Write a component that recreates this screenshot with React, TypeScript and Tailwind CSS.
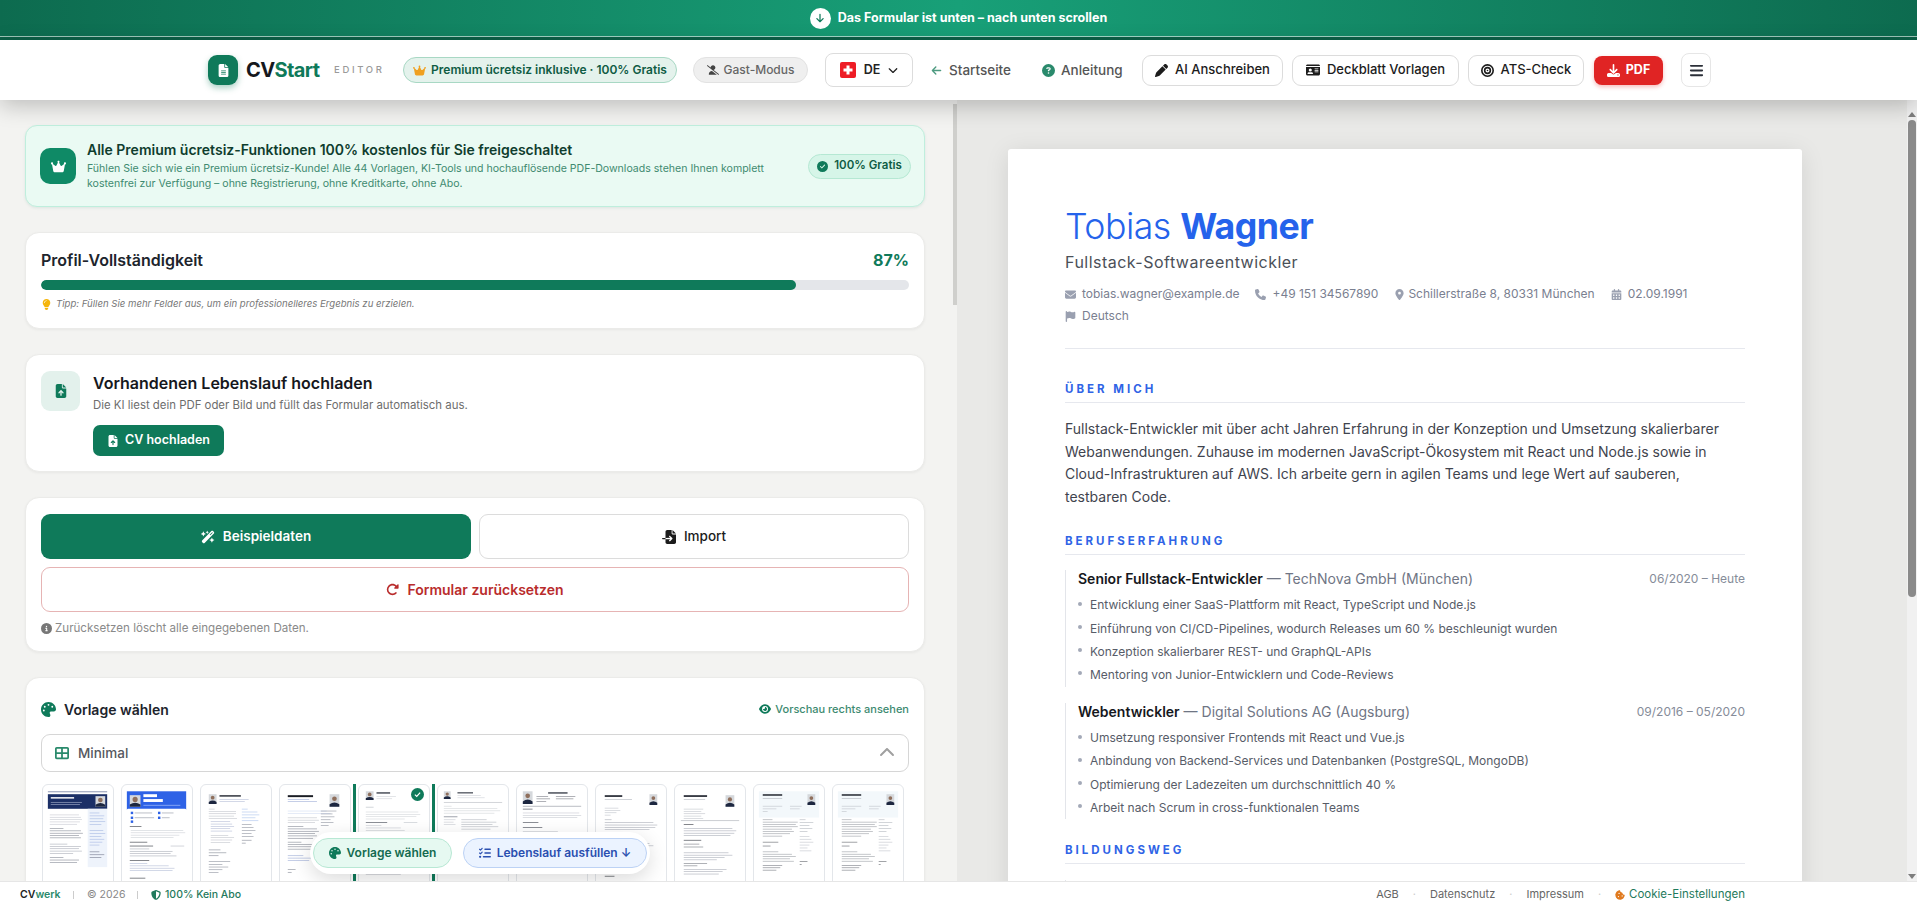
import React from "react";
import {
  FaArrowDown,
  FaArrowLeft,
  FaBars,
  FaBullseye,
  FaCalendarDays,
  FaChevronDown,
  FaChevronUp,
  FaCircleCheck,
  FaCircleInfo,
  FaCircleQuestion,
  FaCookieBite,
  FaCrown,
  FaEnvelope,
  FaEye,
  FaFileArrowUp,
  FaFileImport,
  FaFileLines,
  FaFlag,
  FaDownload,
  FaIdCard,
  FaLightbulb,
  FaListCheck,
  FaLocationDot,
  FaPalette,
  FaPen,
  FaPhone,
  FaRotateRight,
  FaShieldHalved,
  FaTableCellsLarge,
  FaUserSlash,
  FaWandMagicSparkles,
} from "react-icons/fa6";

const GRAY = "#8d93a0";

// one row of "text" in a template thumbnail
const Bar = ({ x, y, w, c = GRAY, h = 0.6 }: { x: number; y: number; w: number; c?: string; h?: number }) => (
  <rect x={x} y={y} width={w} height={h} fill={c} />
);

const Rows = ({ x, y, ws, step = 2.4, c = GRAY }: { x: number; y: number; ws: number[]; step?: number; c?: string }) => (
  <g opacity="0.75">
    {ws.map((w, i) => (
      <Bar key={i} x={x} y={y + i * step} w={w} c={c} />
    ))}
  </g>
);

const Photo = ({ x, y, w, h }: { x: number; y: number; w: number; h: number }) => (
  <g>
    <rect x={x} y={y} width={w} height={h} fill="#d5d8dc" />
    <circle cx={x + w / 2} cy={y + h * 0.36} r={w * 0.24} fill="#8f6f5c" />
    <path d={`M${x} ${y + h}V${y + h * 0.8}Q${x + w / 2} ${y + h * 0.5} ${x + w} ${y + h * 0.8}V${y + h}Z`} fill="#1d2740" />
  </g>
);

const thumbs: React.ReactNode[] = [
  <>
    <rect x="5" y="6" width="61" height="1" fill="#8a94b0" />
    <rect x="5" y="9" width="61" height="15" fill="#1b2f66" />
    <Bar x={8} y={12} w={24} c="#ffffff" h={1.5} />
    <Rows x={8} y={17} ws={[32, 30]} c="#dfe6f7" />
    <Photo x={54} y={11} w={10} h={11} />
    <rect x="46" y="24" width="20" height="60" fill="#eef3fb" />
    <Rows x={7} y={30} ws={[30, 32, 33, 31, 28]} c="#b4b8c2" />
    <Rows x={7} y={44} ws={[14, 32, 34, 30, 32]} c="#5c6272" />
    <Rows x={7} y={60} ws={[18, 32, 30, 33, 24]} c="#8d93a0" />
    <Rows x={7} y={74} ws={[14, 30, 28]} c="#5c6272" />
    <Rows x={48} y={28} ws={[10, 15, 14, 16, 12]} c="#8fa6dc" step={3} />
    <Rows x={48} y={46} ws={[14, 16, 12, 15, 13, 10]} c="#8fa6dc" step={3} />
    <Rows x={48} y={68} ws={[10, 15, 12]} c="#4a5068" step={3} />
  </>,
  <>
    <rect x="5" y="6" width="61" height="19" fill="#2e62e6" />
    <rect x="5" y="24" width="61" height="3" rx="1.5" fill="#ffffff" />
    <Photo x={8} y={10} w={11} h={12} />
    <Bar x={22} y={9} w={14} c="#ffffff" h={3} />
    <Bar x={22} y={14} w={20} c="#ffffff" h={3} />
    <Bar x={22} y={20} w={38} c="#bcd0ff" />
    <rect x="9" y="27" width="2.5" height="2.5" fill="#2e62e6" />
    <rect x="37" y="27" width="2.5" height="2.5" fill="#2e62e6" />
    <rect x="9" y="32" width="2.5" height="2.5" fill="#2e62e6" />
    <rect x="37" y="32" width="2.5" height="2.5" fill="#2e62e6" />
    <rect x="9" y="36" width="2.5" height="2.5" fill="#2e62e6" />
    <Bar x={13} y={28} w={18} />
    <Bar x={41} y={28} w={12} />
    <Bar x={13} y={33} w={20} />
    <Bar x={41} y={33} w={8} />
    <Bar x={8} y={42} w={12} c="#2b2f38" />
    <Rows x={9} y={46} ws={[54, 56, 50, 44]} c="#bdc1c9" />
    <Bar x={8} y={58} w={18} c="#2b2f38" />
    <Bar x={8} y={62} w={24} c="#2b2f38" />
    <Bar x={50} y={62} w={14} c="#b4b8c2" />
    <Rows x={8} y={65} ws={[20, 44, 42, 48]} />
    <Bar x={8} y={77} w={20} c="#2b2f38" />
    <Rows x={8} y={80} ws={[18, 40, 46, 44]} c="#9ba7c8" />
    <Bar x={8} y={95} w={16} c="#2b2f38" />
  </>,
  <>
    <Photo x={8} y={9} w={8} h={10} />
    <Bar x={19} y={10} w={22} c="#2b2f38" h={1.5} />
    <Rows x={19} y={14} ws={[30, 26]} c="#9ba7c8" />
    <Rows x={8} y={24} ws={[6, 28, 28, 26, 29]} c="#adb1ba" />
    <Rows x={10} y={37} ws={[20, 22, 24, 20, 22]} c="#9ba7c8" />
    <Rows x={10} y={51} ws={[18, 24, 22, 20]} c="#adb1ba" />
    <Rows x={8} y={66} ws={[12, 18, 10]} c="#5c6272" step={3} />
    <Rows x={8} y={78} ws={[22, 14, 20, 14, 10]} c="#6a7080" step={2.8} />
    <Rows x={42} y={24} ws={[6, 16, 18, 14, 17]} c="#8fb0e8" step={3} />
    <Rows x={42} y={40} ws={[10, 12, 14, 10, 12]} c="#6a7080" step={3} />
    <Rows x={42} y={56} ws={[10, 4]} c="#5c6272" step={3} />
  </>,
  <>
    <Bar x={8} y={10} w={26} c="#1a1d24" h={2} />
    <Rows x={8} y={14} ws={[22, 30]} c="#7a8fc8" />
    <Photo x={51} y={9} w={10} h={13} />
    <Rows x={8} y={26} ws={[40, 44]} c="#c5d2ee" />
    <Rows x={8} y={33} ws={[30, 32, 28]} c="#adb1ba" />
    <Rows x={8} y={42} ws={[16, 30, 32, 28, 30, 26]} c="#5c6272" />
    <Rows x={8} y={58} ws={[14, 30, 28, 26]} c="#5c6272" />
    <Rows x={8} y={72} ws={[16, 24, 22]} c="#7a8fc8" />
    <Rows x={8} y={86} ws={[8, 4]} c="#5c6272" step={3} />
    <Rows x={42} y={26} ws={[16, 12, 14, 10, 13, 8]} c="#6a7080" step={3} />
  </>,
  <>
    <Photo x={7} y={6} w={8} h={9} />
    <Bar x={18} y={7} w={14} c="#3a3f4a" h={1.4} />
    <Rows x={18} y={11} ws={[20, 16]} c="#c0c4cc" />
    <Rows x={7} y={22} ws={[8]} c="#9aa0aa" />
    <Rows x={7} y={27} ws={[54, 56, 52, 40]} c="#c5c8ce" />
    <Bar x={7} y={38} w={22} c="#3a3f4a" />
    <Bar x={46} y={38} w={14} c="#c0c4cc" />
    <Rows x={7} y={41} ws={[16, 36, 40, 32, 38]} c="#b4b8c2" />
    <Rows x={7} y={54} ws={[20, 40, 36, 40, 30, 36]} c="#b4b8c2" />
    <Rows x={7} y={72} ws={[22, 38, 34, 38]} c="#b4b8c2" />
    <Rows x={7} y={86} ws={[28, 40, 36]} c="#6a7080" />
  </>,
  <>
    <Photo x={6} y={6} w={7} h={8} />
    <Bar x={20} y={7} w={16} c="#3a3f4a" h={1.2} />
    <Rows x={20} y={10} ws={[24, 28]} c="#c0c4cc" />
    <Rows x={6} y={17} ws={[60]} c="#9aa0aa" />
    <Rows x={6} y={21} ws={[8, 55, 58, 52]} c="#c5c8ce" />
    <Bar x={6} y={32} w={14} c="#5c6272" />
    <Rows x={24} y={35} ws={[26, 36, 32, 38, 30]} c="#9aa0aa" />
    <Rows x={6} y={35} ws={[12, 10, 12]} c="#b4b8c2" />
    <Rows x={24} y={50} ws={[18, 36, 30, 34]} c="#6a7080" />
    <Rows x={6} y={66} ws={[18, 34, 30]} c="#adb1ba" />
  </>,
  <>
    <Photo x={6} y={6} w={10} h={13} />
    <Bar x={32} y={7} w={20} c="#3a3f4a" h={1.4} />
    <Rows x={20} y={11} ws={[12, 14, 10]} c="#4a4f5a" step={2.5} />
    <Rows x={40} y={11} ws={[20, 18]} c="#4a4f5a" step={2.5} />
    <Bar x={6} y={21} w={60} c="#8a8f98" />
    <Bar x={6} y={24} w={10} c="#3a3f4a" />
    <Rows x={6} y={28} ws={[58, 60, 56]} c="#b4b8c2" />
    <Bar x={6} y={38} w={16} c="#3a3f4a" />
    <Bar x={6} y={43} w={20} c="#3a3f4a" />
    <Rows x={6} y={47} ws={[36, 50, 44, 48]} c="#adb1ba" />
    <Rows x={6} y={60} ws={[26, 40, 48, 44]} c="#adb1ba" />
    <Rows x={6} y={74} ws={[24, 46, 42]} c="#adb1ba" />
    <Bar x={6} y={90} w={10} c="#3a3f4a" />
  </>,
  <>
    <Bar x={9} y={10} w={18} c="#2b2f38" h={1.8} />
    <Bar x={9} y={14} w={28} c="#adb1ba" />
    <Photo x={55} y={9} w={8} h={11} />
    <Rows x={9} y={23} ws={[14, 16, 12, 6]} c="#adb1ba" />
    <Rows x={9} y={35} ws={[7]} c="#8d93a0" />
    <Rows x={9} y={38} ws={[50, 54, 52, 46]} c="#8d93a0" />
    <Rows x={9} y={50} ws={[14]} c="#8d93a0" />
    <Bar x={9} y={54} w={20} c="#2b2f38" />
    <Rows x={9} y={57} ws={[16, 46, 50, 42, 34]} c="#8d93a0" />
    <Rows x={9} y={71} ws={[24, 14]} c="#4a4f5a" />
    <Rows x={9} y={77} ws={[30, 40, 38, 36]} c="#8d93a0" />
    <Bar x={9} y={90} w={12} c="#4a4f5a" />
    <Bar x={9} y={93} w={10} c="#2b2f38" />
  </>,
  <>
    <Bar x={9} y={10} w={24} c="#2b2f38" h={1.8} />
    <Bar x={9} y={14} w={22} c="#adb1ba" />
    <Photo x={52} y={10} w={9} h={12} />
    <Rows x={9} y={24} ws={[20, 18, 22, 18, 20]} c="#adb1ba" />
    <Rows x={6} y={36} ws={[60]} c="#8a8f98" />
    <Bar x={9} y={40} w={10} c="#2b2f38" />
    <Rows x={9} y={44} ws={[50, 54, 52, 48]} c="#8d93a0" />
    <Bar x={9} y={56} w={18} c="#2b2f38" />
    <Rows x={9} y={60} ws={[16, 20]} c="#4a4f5a" step={3} />
    <Rows x={9} y={69} ws={[46, 50, 42, 34]} c="#8d93a0" />
    <Rows x={9} y={80} ws={[24, 14]} c="#4a4f5a" />
    <Rows x={9} y={86} ws={[44, 40, 36]} c="#8d93a0" />
  </>,
  <>
    <rect x="5" y="6" width="62" height="27" fill="#f3f8fb" />
    <Bar x={9} y={9} w={20} c="#2b2f38" h={1.6} />
    <Bar x={9} y={13} w={20} c="#adb1ba" />
    <Photo x={55} y={9} w={8} h={11} />
    <Rows x={9} y={21} ws={[20, 14, 5]} c="#adb1ba" step={2.8} />
    <Rows x={37} y={21} ws={[12, 10]} c="#adb1ba" step={2.8} />
    <Rows x={9} y={35} ws={[10, 36, 34, 36, 30, 32, 28, 20]} c="#7a8088" />
    <Rows x={9} y={58} ws={[16, 8]} c="#2b2f38" step={4} />
    <Rows x={9} y={68} ws={[16, 30, 34, 28, 32]} c="#7a8088" />
    <Rows x={9} y={82} ws={[20, 18, 14]} c="#4a4f5a" />
    <Rows x={47} y={35} ws={[6, 14, 10, 13, 8]} c="#9aa0aa" step={3} />
    <Rows x={47} y={52} ws={[10, 12, 14, 10, 8, 12]} c="#adb1ba" step={3} />
    <Rows x={47} y={78} ws={[8, 2]} c="#2b2f38" step={3} />
  </>,
];

const Thumb = ({ index, selected }: { index: number; selected?: boolean }) => (
  <div className="relative h-[105px] w-[72px] shrink-0">
    {selected && <div className="absolute inset-y-0 -inset-x-[5px] border-x-[3px] border-[#0f7a5a]" />}
    <div className="h-full w-full overflow-hidden rounded-[6px] border border-[#e3e6ea] bg-white">
      <svg viewBox="0 0 72 105" className="h-full w-full">
        {thumbs[index]}
      </svg>
    </div>
    {selected && (
      <div className="absolute right-[6px] top-[4px] flex h-[13px] w-[13px] items-center justify-center rounded-full bg-[#0f7a5a]">
        <svg viewBox="0 0 12 12" className="h-[9px] w-[9px]">
          <path d="M2.5 6.2 5 8.6 9.5 3.6" fill="none" stroke="#fff" strokeWidth="1.6" />
        </svg>
      </div>
    )}
  </div>
);

const Card = ({ className, children }: { className: string; children: React.ReactNode }) => (
  <section className={`rounded-[14px] border border-[#ebebe9] bg-white shadow-[0_1px_3px_rgba(0,0,0,0.05)] ${className}`}>
    {children}
  </section>
);

const NavButton = ({ icon, label, className }: { icon: React.ReactNode; label: string; className: string }) => (
  <button className={`flex h-[31px] items-center justify-center gap-[7px] rounded-[9px] border border-[#dcdcdc] bg-white text-[13px] font-medium text-[#1c1c1c] ${className}`}>
    {icon}
    {label}
  </button>
);

const Contact = ({ icon, text, gap }: { icon: React.ReactNode; text: string; gap: string }) => (
  <span className={`flex items-center ${gap}`}>
    <span className="text-[11px] text-[#9aa0b0]">{icon}</span>
    {text}
  </span>
);

const Section = ({ title, className }: { title: string; className: string }) => (
  <h2 className={`border-b border-[#e6e8ee] pb-[4px] text-[11.5px] font-bold uppercase leading-[18px] tracking-[0.26em] text-[#2f64e6] ${className}`}>
    {title}
  </h2>
);

const Job = ({ role, company, date, items }: { role: string; company: string; date: string; items: string[] }) => (
  <div className="border-l border-[#e3e5ea] pl-[12px]">
    <div className="flex h-[18px] items-center justify-between text-[14px]">
      <span className="text-[#6f7584]">
        <b className="font-semibold text-[#16181d]">{role}</b> — {company}
      </span>
      <span className="text-[12px] text-[#868c99]">{date}</span>
    </div>
    <ul className="mt-[6px]">
      {items.map((t) => (
        <li key={t} className="relative flex h-[23.2px] items-center pl-[12px] text-[12px] text-[#575c68]">
          <span className="absolute left-0 top-[8px] h-[4px] w-[4px] rounded-full bg-[#a3a9b8]" />
          {t}
        </li>
      ))}
    </ul>
  </div>
);

export default function App() {
  return (
    <div className="flex h-screen w-full flex-col overflow-hidden bg-white font-['Inter',sans-serif]">
      {/* top banner */}
      <div className="flex h-10 shrink-0 flex-col bg-[linear-gradient(90deg,#0d6b4f,#18a078_50%,#0d6b4f)]">
        <div className="flex h-[36px] items-center justify-center gap-[7px] text-[12.5px] font-bold text-white">
          <span className="flex h-[21px] w-[21px] items-center justify-center rounded-full bg-white text-[#0f7a5a]">
            <FaArrowDown className="text-[10px]" />
          </span>
          Das Formular ist unten – nach unten scrollen
        </div>
        <div className="h-px bg-white/60" />
        <div className="h-[3px] bg-[#0d6048]" />
      </div>

      {/* nav */}
      <header className="relative z-20 flex h-[60px] shrink-0 items-center bg-white pl-[208px] shadow-[0_6px_22px_rgba(0,0,0,0.22)]">
        <span className="flex h-[30px] w-[30px] items-center justify-center rounded-[9px] bg-[#0f7a5a] text-[13px] text-white shadow-[0_3px_6px_rgba(15,122,90,0.35)]">
          <FaFileLines />
        </span>
        <span className="ml-[8px] w-[72px] text-[20px] font-bold tracking-[-0.03em] text-[#16181d]">
          CV<span className="text-[#0f7a5a]">Start</span>
        </span>
        <span className="ml-[16px] w-[50px] text-[9.5px] font-medium tracking-[0.28em] text-[#9a9a9a]">EDITOR</span>
        <span className="ml-[19px] flex h-[26px] w-[274px] items-center justify-center gap-[5px] rounded-full border border-[#a8d8c4] bg-[#e4f2ec] text-[12px] font-semibold text-[#0f5c44]">
          <FaCrown className="text-[13px] text-[#f0a020]" />
          Premium ücretsiz inklusive · 100% Gratis
        </span>
        <span className="ml-[16px] flex h-[26px] w-[115px] items-center justify-center gap-[5px] rounded-full border border-[#e2e2e2] bg-[#efefef] text-[12px] font-medium text-[#666]">
          <FaUserSlash className="text-[12px] text-[#444]" />
          Gast-Modus
        </span>
        <button className="ml-[17px] flex h-[34px] w-[88px] items-center justify-center gap-[8px] rounded-[8px] border border-[#dcdcdc] text-[12.5px] font-semibold text-[#222]">
          <svg viewBox="0 0 16 16" className="h-[16px] w-[16px]">
            <rect width="16" height="16" rx="2" fill="#ee1c25" />
            <path d="M6.5 3.5h3v3h3v3h-3v3h-3v-3h-3v-3h3z" fill="#fff" />
          </svg>
          DE
          <FaChevronDown className="text-[10px]" />
        </button>
        <span className="ml-[18px] flex w-[81px] items-center gap-[7px] text-[13.5px] font-medium text-[#555]">
          <FaArrowLeft className="text-[11px] text-[#4d9a80]" />
          Startseite
        </span>
        <span className="ml-[30px] flex w-[81px] items-center gap-[6px] text-[13.5px] font-medium text-[#555]">
          <FaCircleQuestion className="text-[13px] text-[#2a8a6c]" />
          Anleitung
        </span>
        <NavButton className="ml-[19px] w-[141px]" icon={<FaPen className="text-[13px]" />} label="AI Anschreiben" />
        <NavButton className="ml-[9px] w-[167px]" icon={<FaIdCard className="text-[14px]" />} label="Deckblatt Vorlagen" />
        <NavButton className="ml-[9px] w-[116px]" icon={<FaBullseye className="text-[13px]" />} label="ATS-Check" />
        <button className="ml-[10px] flex h-[29px] w-[69px] items-center justify-center gap-[6px] rounded-[8px] bg-[#e02424] text-[12.5px] font-bold text-white shadow-[0_2px_4px_rgba(224,36,36,0.3)]">
          <FaDownload className="text-[13px]" />
          PDF
        </button>
        <button className="ml-[18px] flex h-[34px] w-[30px] items-center justify-center rounded-[8px] border border-[#e6e6e6] text-[15px] text-[#2b2f38]">
          <FaBars />
        </button>
      </header>

      <main className="flex min-h-0 flex-1">
        {/* form column */}
        <div className="relative w-[957px] shrink-0 overflow-hidden bg-[#f3f3f1] pl-[25px] pr-[32px] pt-[25px]">
          <div className="absolute right-0 top-[4px] h-[201px] w-[4px] bg-[#cfcfcc]" />
          <div className="flex flex-col gap-[25px]">
            <div className="flex h-[82px] items-center rounded-[12px] border border-[#bfeedd] bg-[#eafaf3] pl-[14px] pr-[13px] shadow-[0_1px_3px_rgba(16,122,90,0.1)]">
              <span className="flex h-[36px] w-[36px] shrink-0 items-center justify-center rounded-[10px] bg-[#0f8a66] text-[15px] text-white">
                <FaCrown />
              </span>
              <div className="ml-[11px] flex-1">
                <div className="text-[14px] font-semibold leading-[18px] text-[#0f3d2e]">
                  Alle Premium ücretsiz-Funktionen 100% kostenlos für Sie freigeschaltet
                </div>
                <p className="mt-[2px] w-[690px] text-[10.55px] leading-[15px] text-[#3f8a70]">
                  Fühlen Sie sich wie ein Premium ücretsiz-Kunde! Alle 44 Vorlagen, KI-Tools und hochauflösende PDF-Downloads stehen Ihnen komplett
                  <br />
                  kostenfrei zur Verfügung – ohne Registrierung, ohne Kreditkarte, ohne Abo.
                </p>
              </div>
              <span className="flex h-[25px] w-[103px] shrink-0 items-center justify-center gap-[6px] rounded-full border border-[#b5e8d3] bg-[#d6f5e8] text-[11.5px] font-semibold text-[#0f5c44]">
                <FaCircleCheck className="text-[11px] text-[#0f7a5a]" />
                100% Gratis
              </span>
            </div>

            <Card className="h-[97px] px-[15px] pt-[15px]">
              <div className="flex h-[24px] items-center justify-between text-[16px] font-semibold text-[#20242c]">
                Profil-Vollständigkeit
                <span className="font-bold text-[#0f7a5a]">87%</span>
              </div>
              <div className="mt-[8px] h-[10px] overflow-hidden rounded-full bg-[#e4e6ea]">
                <div className="h-full w-[87%] rounded-full bg-[#0f7a5a]" />
              </div>
              <div className="mt-[7px] flex items-center gap-[4px] text-[9.6px] italic text-[#777]">
                <FaLightbulb className="text-[11px] not-italic text-[#f5b50a]" />
                Tipp: Füllen Sie mehr Felder aus, um ein professionelleres Ergebnis zu erzielen.
              </div>
            </Card>

            <Card className="flex h-[118px] gap-[13px] px-[15px] pt-[16px]">
              <span className="flex h-[40px] w-[39px] shrink-0 items-center justify-center rounded-[9px] bg-[#e3f1ec] text-[14px] text-[#0f7a5a]">
                <FaFileArrowUp />
              </span>
              <div>
                <div className="text-[16px] font-semibold leading-[25px] text-[#16181d]">Vorhandenen Lebenslauf hochladen</div>
                <div className="text-[11.4px] leading-[18px] text-[#6d6d6d]">Die KI liest dein PDF oder Bild und füllt das Formular automatisch aus.</div>
                <button className="mt-[11px] flex h-[31px] w-[131px] items-center justify-center gap-[6px] rounded-[7px] bg-[#0f7a5a] text-[12.5px] font-semibold text-white">
                  <FaFileArrowUp className="text-[12px]" />
                  CV hochladen
                </button>
              </div>
            </Card>

            <Card className="h-[155px] px-[15px] pt-[16px]">
              <div className="grid grid-cols-2 gap-[8px]">
                <button className="flex h-[45px] items-center justify-center gap-[8px] rounded-[9px] bg-[#0f7a5a] text-[13.5px] font-semibold text-white">
                  <FaWandMagicSparkles className="text-[14px]" />
                  Beispieldaten
                </button>
                <button className="flex h-[45px] items-center justify-center gap-[8px] rounded-[9px] border border-[#dcdcdc] bg-white text-[13.5px] font-medium text-[#1c1c1c]">
                  <FaFileImport className="text-[14px]" />
                  Import
                </button>
              </div>
              <button className="mt-[8px] flex h-[45px] w-full items-center justify-center gap-[8px] rounded-[9px] border border-[#e6b4b4] bg-white text-[14px] font-semibold text-[#b92c2c]">
                <FaRotateRight className="text-[13px]" />
                Formular zurücksetzen
              </button>
              <div className="mt-[8px] flex items-center gap-[3px] text-[11.6px] text-[#8a8a8a]">
                <FaCircleInfo className="text-[11px] text-[#777]" />
                Zurücksetzen löscht alle eingegebenen Daten.
              </div>
            </Card>

            <Card className="h-[260px] px-[15px] pt-[16px]">
              <div className="flex h-[30px] items-center justify-between">
                <span className="flex items-center gap-[8px] text-[14px] font-semibold text-[#20242c]">
                  <FaPalette className="text-[15px] text-[#0f7a5a]" />
                  Vorlage wählen
                </span>
                <span className="flex items-center gap-[4px] text-[11px] font-medium text-[#3c8a70]">
                  <FaEye className="text-[12px] text-[#0f7a5a]" />
                  Vorschau rechts ansehen
                </span>
              </div>
              <div className="mt-[10px] flex h-[38px] items-center justify-between rounded-[9px] border border-[#d6d6d6] pl-[13px] pr-[13px] text-[#55585e]">
                <span className="flex items-center gap-[9px] text-[13.5px] font-medium">
                  <FaTableCellsLarge className="text-[14px] text-[#2a8a6c]" />
                  Minimal
                </span>
                <FaChevronUp className="text-[16px] text-[#a0a0a0]" />
              </div>
              <div className="mt-[12px] flex gap-[7px] pl-[1px]">
                {thumbs.slice(0, 4).map((_, i) => (
                  <Thumb key={i} index={i} />
                ))}
                <Thumb index={4} selected />
                {thumbs.slice(5).map((_, i) => (
                  <Thumb key={i} index={i + 5} />
                ))}
                <Thumb index={9} />
              </div>
            </Card>
          </div>
          <div className="absolute bottom-[7px] left-[310px] flex h-[42px] w-[340px] items-center gap-[11px] rounded-full bg-white pl-[3px] shadow-[0_6px_20px_rgba(0,0,0,0.14)]">
            <span className="flex h-[30px] w-[139px] items-center justify-center gap-[6px] rounded-full border border-[#b8e8d4] bg-[#e6f9f1] text-[12px] font-semibold text-[#146b50]">
              <FaPalette className="text-[12px] text-[#0f7a5a]" />
              Vorlage wählen
            </span>
            <span className="flex h-[30px] w-[184px] items-center justify-center gap-[6px] rounded-full border border-[#bcd2f5] bg-[#ebf3ff] text-[12px] font-semibold text-[#2a4fb0]">
              <FaListCheck className="text-[12px]" />
              Lebenslauf ausfüllen ↓
            </span>
          </div>
        </div>

        {/* preview column */}
        <div className="min-w-0 flex-1 overflow-hidden bg-[#e9e9e7] pl-[51px] pt-[49px]">
          <article className="h-[900px] w-[794px] rounded-[3px] bg-white px-[57px] pt-[53px] shadow-[0_4px_24px_rgba(0,0,0,0.1)]">
            <h1 className="text-[35.7px] font-light leading-[49px] tracking-[-0.015em] text-[#2563eb]">
              Tobias <b className="font-bold">Wagner</b>
            </h1>
            <div className="text-[16px] font-normal leading-[22px] tracking-[0.03em] text-[#4b5058]">Fullstack-Softwareentwickler</div>
            <div className="mt-[10px] flex h-[22px] items-center gap-[16px] text-[12px] text-[#7a8090]">
              <Contact gap="gap-[6px]" icon={<FaEnvelope />} text="tobias.wagner@example.de" />
              <Contact gap="gap-[6px]" icon={<FaPhone />} text="+49 151 34567890" />
              <Contact gap="gap-[3px]" icon={<FaLocationDot />} text="Schillerstraße 8, 80331 München" />
              <Contact gap="gap-[6px]" icon={<FaCalendarDays />} text="02.09.1991" />
            </div>
            <div className="flex h-[22px] items-center text-[12px] text-[#7a8090]">
              <Contact gap="gap-[6px]" icon={<FaFlag />} text="Deutsch" />
            </div>
            <hr className="mt-[21px] border-[#e6e8ee]" />
            <Section className="mt-[31px]" title="Über mich" />
            <p className="mt-[15px] text-[14px] leading-[22.7px] text-[#3f444e]">
              Fullstack-Entwickler mit über acht Jahren Erfahrung in der Konzeption und Umsetzung skalierbarer Webanwendungen. Zuhause im modernen
              JavaScript-Ökosystem mit React und Node.js sowie in Cloud-Infrastrukturen auf AWS. Ich arbeite gern in agilen Teams und lege Wert auf
              sauberen,
              <br />
              testbaren Code.
            </p>
            <Section className="mt-[23px]" title="Berufserfahrung" />
            <div className="mt-[15px] flex flex-col gap-[16px]">
              <Job
                role="Senior Fullstack-Entwickler"
                company="TechNova GmbH (München)"
                date="06/2020 – Heute"
                items={[
                  "Entwicklung einer SaaS-Plattform mit React, TypeScript und Node.js",
                  "Einführung von CI/CD-Pipelines, wodurch Releases um 60 % beschleunigt wurden",
                  "Konzeption skalierbarer REST- und GraphQL-APIs",
                  "Mentoring von Junior-Entwicklern und Code-Reviews",
                ]}
              />
              <Job
                role="Webentwickler"
                company="Digital Solutions AG (Augsburg)"
                date="09/2016 – 05/2020"
                items={[
                  "Umsetzung responsiver Frontends mit React und Vue.js",
                  "Anbindung von Backend-Services und Datenbanken (PostgreSQL, MongoDB)",
                  "Optimierung der Ladezeiten um durchschnittlich 40 %",
                  "Arbeit nach Scrum in cross-funktionalen Teams",
                ]}
              />
            </div>
            <Section className="mt-[22px]" title="Bildungsweg" />
            <div className="mt-[16px] h-[60px] border-l border-[#e3e5ea]" />
          </article>
        </div>

        {/* page scrollbar */}
        <div className="flex w-[10px] shrink-0 flex-col items-center bg-[#f1f1f1] pt-[12px]">
          <span className="h-0 w-0 border-x-[4px] border-b-[5px] border-x-transparent border-b-[#7d7d7d]" />
          <div className="mt-[3px] h-[477px] w-[8px] rounded-full bg-[#8a8a8a]" />
          <div className="flex-1" />
          <span className="mb-[2px] h-0 w-0 border-x-[4px] border-t-[5px] border-x-transparent border-t-[#7d7d7d]" />
        </div>
      </main>

      {/* footer */}
      <footer className="relative z-10 flex h-[26px] shrink-0 items-center justify-between whitespace-nowrap border-t border-[#e6e6e6] bg-white pl-[20px] pr-[172px] text-[10.5px] text-[#777]">
        <div className="flex items-center">
          <span className="w-[40px] font-semibold text-[#222]">
            CV<span className="text-[#2a8a6c]">werk</span>
          </span>
          <span className="ml-[13px] h-[8px] w-px bg-[#ccc]" />
          <span className="ml-[13px] w-[37px] text-[#888]">© 2026</span>
          <span className="ml-[13px] h-[8px] w-px bg-[#ccc]" />
          <span className="ml-[13px] flex items-center gap-[4px] font-medium text-[#1f7a5c]">
            <FaShieldHalved className="text-[10px]" />
            100% Kein Abo
          </span>
        </div>
        <div className="flex items-center gap-[14px] text-[11px] text-[#666]">
          <span>AGB</span>
          <span className="text-[#ccc]">·</span>
          <span>Datenschutz</span>
          <span className="text-[#ccc]">·</span>
          <span>Impressum</span>
          <span className="text-[#ccc]">·</span>
          <span className="flex items-center gap-[4px] text-[11.5px] text-[#1f7a5c]">
            <FaCookieBite className="text-[10px] text-[#e07a1f]" />
            Cookie-Einstellungen
          </span>
        </div>
      </footer>
    </div>
  );
}
